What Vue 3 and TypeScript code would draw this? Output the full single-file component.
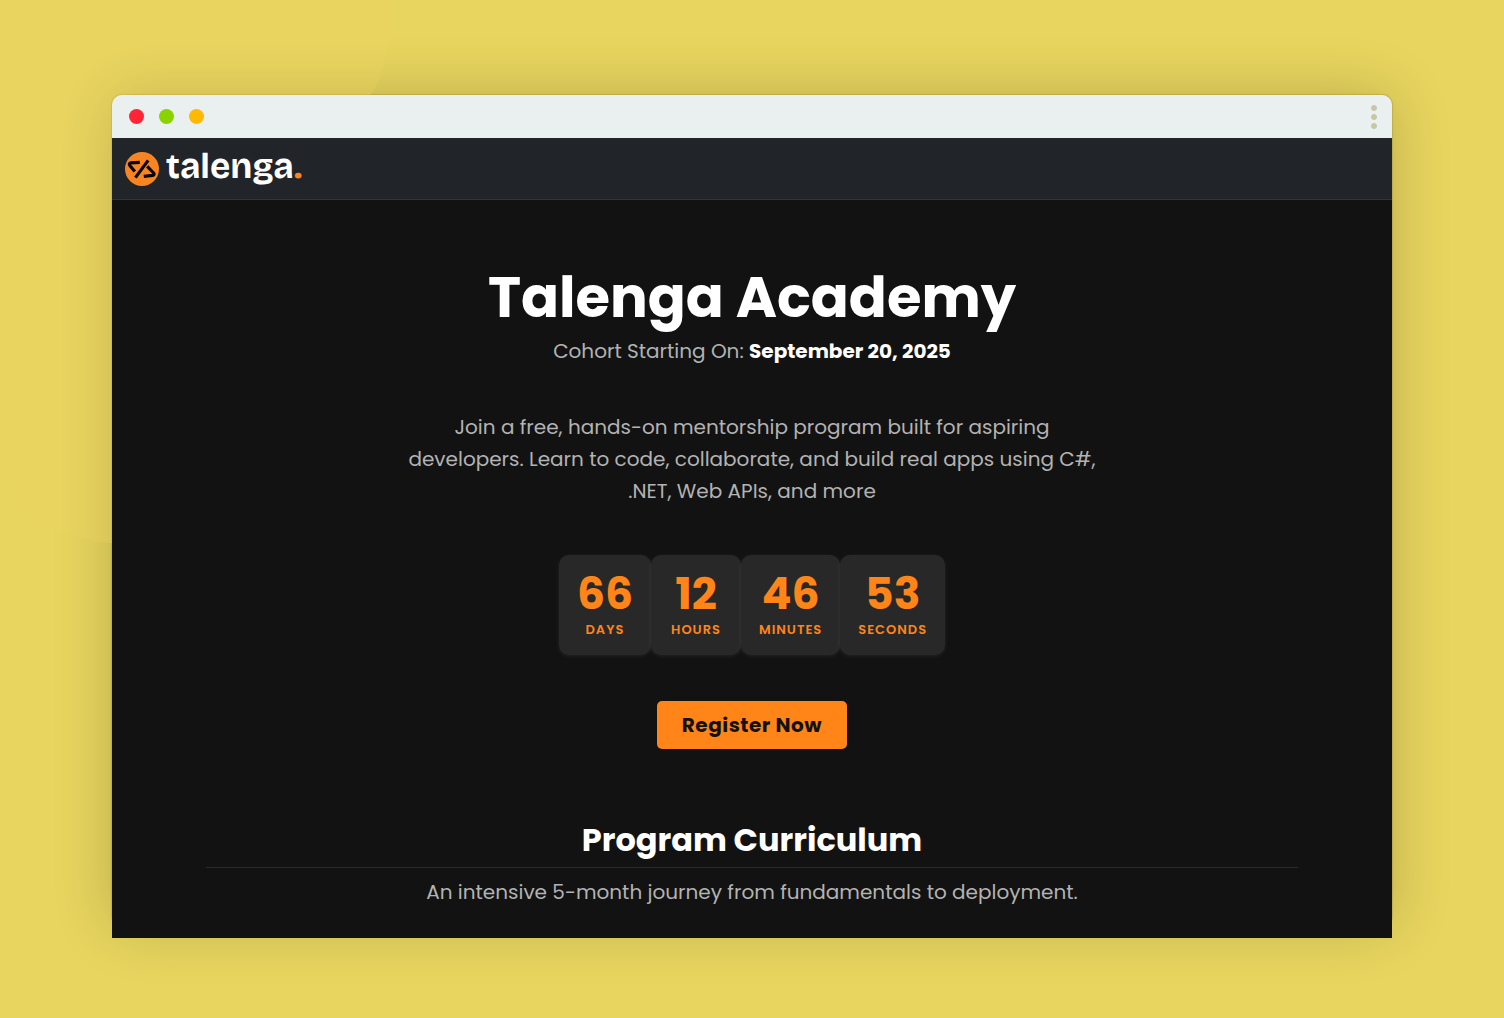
<script setup lang="ts">
interface CountdownUnit {
  value: number
  label: string
}

const units: CountdownUnit[] = [
  { value: 66, label: 'Days' },
  { value: 12, label: 'Hours' },
  { value: 46, label: 'Minutes' },
  { value: 53, label: 'Seconds' },
]
</script>

<template>
  <div class="stage">
    <svg class="blob" viewBox="0 0 400 550" aria-hidden="true">
      <path d="M0 0H390Q390 76 368 97L250 300L130 543Q80 546 40 520L0 450Z" fill="#e8d55f" fill-opacity="0.32" />
    </svg>
    <div class="browser">
      <div class="chrome">
        <span class="light red"></span>
        <span class="light green"></span>
        <span class="light amber"></span>
        <button class="more" type="button" aria-label="More options">
          <span></span><span></span><span></span>
        </button>
      </div>
      <header class="navbar">
        <a class="brand" href="#" aria-label="talenga.">
          <svg class="mark" viewBox="0 0 34 34" aria-hidden="true">
            <circle cx="17" cy="17" r="17" fill="#f98522" />
            <g fill="none" stroke="#080808" stroke-width="3.2" stroke-linejoin="round">
              <path d="M14.8 10.4L6 10.8Q3.4 11.4 4.8 13.4L9.8 19.6" />
              <path d="M22.2 14.4L28.6 21Q30 23 27.8 23.4L18.8 24.4" />
              <path d="M23.2 8.4L10.4 25.6" />
            </g>
          </svg>
          <span class="wordmark">talenga<span class="dot">.</span></span>
        </a>
      </header>
      <main class="content">
        <section class="hero">
          <h1>Talenga Academy</h1>
          <p class="cohort">Cohort Starting On: <strong>September 20, 2025</strong></p>
          <p class="lead">
            Join a free, hands-on mentorship program built for aspiring<br />
            developers. Learn to code, collaborate, and build real apps using C#,<br />
            .NET, Web APIs, and more
          </p>
          <div class="countdown">
            <div v-for="unit in units" :key="unit.label" class="unit">
              <span class="value">{{ unit.value }}</span>
              <span class="label">{{ unit.label }}</span>
            </div>
          </div>
          <button class="register" type="button">Register Now</button>
        </section>
        <section class="curriculum">
          <h2>Program Curriculum</h2>
          <p>An intensive 5-month journey from fundamentals to deployment.</p>
        </section>
      </main>
    </div>
  </div>
</template>

<style>
body {
  margin: 0;
  background: #e8d55f;
}
</style>

<style scoped>
.stage {
  position: relative;
  isolation: isolate;
  box-sizing: border-box;
  min-height: 100vh;
  padding: 95px 112px 80px;
  overflow: hidden;
  background: #e8d55f;
  font-family: Poppins, Inter, sans-serif;
}
.blob {
  position: absolute;
  z-index: -1;
  top: 0;
  left: 0;
  width: 400px;
  height: 550px;
}
.browser {
  position: relative;
}
.browser::before {
  content: '';
  position: absolute;
  z-index: -2;
  inset: 0 0 12px;
  border-radius: 10px;
  box-shadow: 0 0 60px rgba(0, 0, 0, 0.2), 0 0 1px 1px rgba(120, 100, 20, 0.2);
}
.chrome {
  display: flex;
  align-items: center;
  gap: 15px;
  height: 43px;
  padding: 0 15px 0 17px;
  border-radius: 10px 10px 0 0;
  background: #eaf0f0;
}
.light {
  width: 15px;
  height: 15px;
  border-radius: 50%;
}
.red {
  background: #ff2436;
}
.green {
  background: #89d300;
}
.amber {
  background: #ffb900;
}
.more {
  display: flex;
  flex-direction: column;
  gap: 3px;
  margin-left: auto;
  padding: 0;
  border: 0;
  background: none;
}
.more span {
  box-sizing: border-box;
  width: 6px;
  height: 6px;
  border: 1px solid #bec5bd;
  border-radius: 50%;
  background: #d0c88f;
}
.navbar {
  display: flex;
  align-items: center;
  height: 61px;
  padding: 0 13px;
  border-bottom: 1px solid #343536;
  background: #212529;
}
.brand {
  display: flex;
  align-items: center;
  gap: 7px;
  color: #fff;
  text-decoration: none;
}
.mark {
  width: 34px;
  height: 34px;
}
.wordmark {
  padding-bottom: 6px;
  font: 700 35px/40px 'Bricolage Grotesque', 'Work Sans', Inter, sans-serif;
}
.dot {
  color: #f98522;
}
.content {
  padding: 64px 94px 30px;
  background: #121212;
  color: #b3b3b3;
  text-align: center;
}
h1,
h2,
p {
  margin: 0;
}
h1 {
  color: #fff;
  font-size: 56px;
  line-height: 68px;
  font-weight: 700;
}
.cohort {
  margin-top: 3px;
  font-size: 20px;
  line-height: 32px;
}
.cohort strong {
  color: #fff;
  font-weight: 700;
}
.lead {
  margin-top: 44px;
  font-size: 20px;
  line-height: 32px;
}
.countdown {
  display: flex;
  justify-content: center;
  margin-top: 48px;
}
.unit {
  display: flex;
  box-sizing: border-box;
  flex-direction: column;
  gap: 2px;
  min-width: 90px;
  height: 100px;
  padding: 15px 18px;
  border-radius: 10px;
  background: #282828;
  box-shadow: 0 1px 4px rgba(255, 255, 255, 0.08);
  color: #ff8519;
}
.value {
  font-size: 44px;
  line-height: 48px;
  font-weight: 700;
}
.label {
  font-size: 13px;
  line-height: 20px;
  font-weight: 600;
  letter-spacing: 1px;
  text-transform: uppercase;
}
.register {
  height: 48px;
  margin-top: 46px;
  padding: 0 25px;
  border: 0;
  border-radius: 5px;
  background: #ff8519;
  color: #121212;
  font: inherit;
  font-size: 20px;
  font-weight: 700;
  letter-spacing: 0.025em;
}
.curriculum {
  margin-top: 69px;
}
h2 {
  padding-bottom: 5px;
  border-bottom: 1px solid #2a2a2a;
  color: #fff;
  font-size: 32px;
  line-height: 44px;
  font-weight: 700;
}
.curriculum p {
  margin-top: 8px;
  font-size: 20px;
  line-height: 32px;
}
</style>
